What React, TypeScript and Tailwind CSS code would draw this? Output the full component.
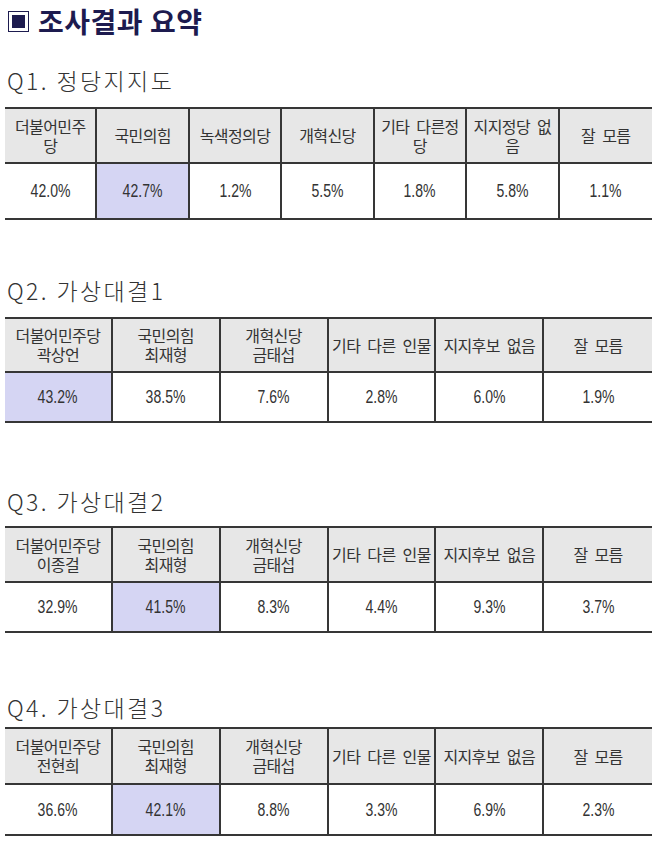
import React from "react";

type Section = {
  title: string;
  headers: string[];
  values: string[];
  hi: number;
  mt: string;
  mb: string;
  headH: string;
  dataH: string;
};

const sections: Section[] = [
  {
    title: "Q1. 정당지지도",
    headers: ["더불어민주\n당", "국민의힘", "녹색정의당", "개혁신당", "기타 다른정\n당", "지지정당 없\n음", "잘 모름"],
    values: ["42.0%", "42.7%", "1.2%", "5.5%", "1.8%", "5.8%", "1.1%"],
    hi: 1,
    mt: "mt-[23px]",
    mb: "mb-[12px]",
    headH: "h-[55px]",
    dataH: "h-[54px]",
  },
  {
    title: "Q2. 가상대결1",
    headers: ["더불어민주당\n곽상언", "국민의힘\n최재형", "개혁신당\n금태섭", "기타 다른 인물", "지지후보 없음", "잘 모름"],
    values: ["43.2%", "38.5%", "7.6%", "2.8%", "6.0%", "1.9%"],
    hi: 0,
    mt: "mt-[55px]",
    mb: "mb-[12px]",
    headH: "h-[54px]",
    dataH: "h-[48px]",
  },
  {
    title: "Q3. 가상대결2",
    headers: ["더불어민주당\n이종걸", "국민의힘\n최재형", "개혁신당\n금태섭", "기타 다른 인물", "지지후보 없음", "잘 모름"],
    values: ["32.9%", "41.5%", "8.3%", "4.4%", "9.3%", "3.7%"],
    hi: 1,
    mt: "mt-[63px]",
    mb: "mb-[10px]",
    headH: "h-[55px]",
    dataH: "h-[48px]",
  },
  {
    title: "Q4. 가상대결3",
    headers: ["더불어민주당\n전현희", "국민의힘\n최재형", "개혁신당\n금태섭", "기타 다른 인물", "지지후보 없음", "잘 모름"],
    values: ["36.6%", "42.1%", "8.8%", "3.3%", "6.9%", "2.3%"],
    hi: 1,
    mt: "mt-[59px]",
    mb: "mb-[5px]",
    headH: "h-[56px]",
    dataH: "h-[49px]",
  },
];

const kr = { fontFamily: '"Noto Sans CJK KR", "Noto Sans", sans-serif' };
const num = { fontFamily: '"Liberation Sans", Arial, sans-serif' };

function Table({ s }: { s: Section }) {
  const cols = s.headers.length === 7 ? "grid-cols-7" : "grid-cols-6";
  const last = s.headers.length - 1;
  return (
    <div className="ml-[5px] w-[647px] border-y-2 border-[#363636]">
      <div className={`grid ${cols} ${s.headH} bg-[#e7e7e7] border-b-2 border-[#363636]`}>
        {s.headers.map((h, i) => (
          <div
            key={i}
            className={`flex items-center justify-center text-center whitespace-pre-line text-[16px] leading-[19px] tracking-[-0.6px] [word-spacing:4px] text-[#333333] ${
              i !== last ? "border-r-2 border-[#363636]" : ""
            }`}
            style={kr}
          >
            {h}
          </div>
        ))}
      </div>
      <div className={`grid ${cols} ${s.dataH}`}>
        {s.values.map((v, i) => (
          <div
            key={i}
            className={`flex items-center justify-center ${i === s.hi ? "bg-[#d5d5f3]" : "bg-white"} ${
              i !== last ? "border-r-2 border-[#363636]" : ""
            }`}
          >
            <span className="inline-block scale-x-[0.78] text-[18px] leading-none text-[#333333]" style={num}>
              {v}
            </span>
          </div>
        ))}
      </div>
    </div>
  );
}

export default function App() {
  return (
    <div className="w-[670px] h-[851px] bg-white overflow-hidden">
      <div className="h-[42px] flex items-center pl-[8px] gap-[9px]">
        <div className="w-[21px] h-[21px] border border-[#1d1b4f] flex items-center justify-center">
          <div className="w-[13px] h-[13px] bg-[#1d1b4f]" />
        </div>
        <div className="text-[28px] font-bold leading-none tracking-[0.5px] text-[#1d1b4f]" style={kr}>
          조사결과 요약
        </div>
      </div>
      {sections.map((s, i) => (
        <div key={i}>
          <div
            className={`${s.mt} ${s.mb} h-[30px] flex items-center pl-[7px] text-[23px] font-light tracking-[2.4px] leading-none text-[#333333]`}
            style={kr}
          >
            {s.title}
          </div>
          <Table s={s} />
        </div>
      ))}
    </div>
  );
}
